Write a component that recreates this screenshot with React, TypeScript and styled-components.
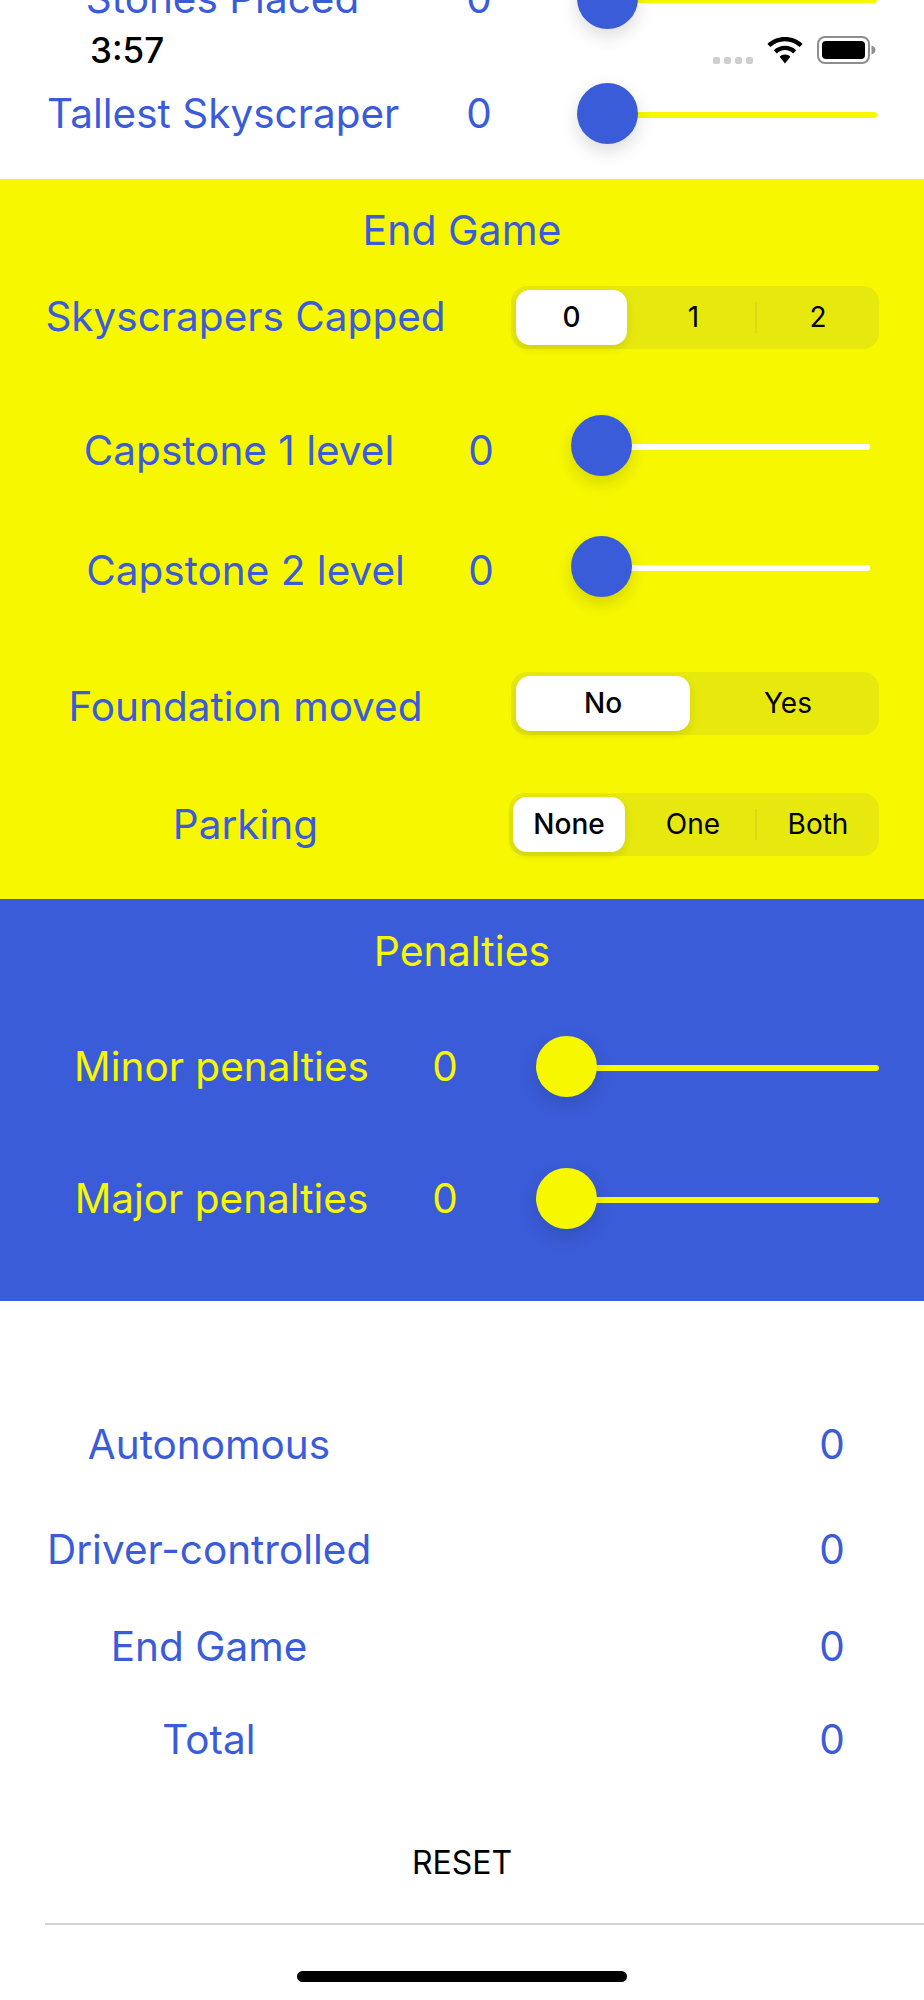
import React from "react";
import styled, { createGlobalStyle } from "styled-components";

const BLUE = "#3a5cd8";
const YELLOW = "#f7f800";

const GlobalStyle = createGlobalStyle`
  html, body {
    margin: 0;
    padding: 0;
    background: #ffffff;
  }
  * {
    box-sizing: border-box;
  }
`;

const Screen = styled.div`
  position: relative;
  width: 924px;
  height: 2000px;
  overflow: hidden;
  background: #ffffff;
  font-family: Inter, "Liberation Sans", sans-serif;
`;

// the list is scrolled: the first row sits half above the screen
const Scroller = styled.div`
  margin-top: -59px;
`;

const StatusBar = styled.div`
  position: absolute;
  top: 0;
  left: 0;
  right: 0;
  height: 80px;
`;

const Clock = styled.span`
  position: absolute;
  left: 90px;
  top: 29px;
  font-size: 35px;
  line-height: 42px;
  font-weight: 500;
  color: #000000;
`;

const StatusIcons = styled.div`
  position: absolute;
  left: 713px;
  top: 36px;
  display: flex;
  align-items: center;
  gap: 14px;
`;

const SignalDots = styled.div`
  display: flex;
  gap: 4px;
  margin-top: 20px;
`;

const SignalDot = styled.span`
  width: 7px;
  height: 7px;
  border-radius: 2px;
  background: #cfcfcf;
`;

const Section = styled.section<{ $bg: string; $top: number; $bottom: number }>`
  background: ${(p) => p.$bg};
  padding-top: ${(p) => p.$top}px;
  padding-bottom: ${(p) => p.$bottom}px;
`;

const SectionTitle = styled.div<{ $color: string }>`
  height: 48px;
  line-height: 48px;
  font-size: 41px;
  text-align: center;
  color: ${(p) => p.$color};
`;

const Row = styled.div<{ $columns: string; $left: number; $top?: number; $height?: number }>`
  display: grid;
  grid-template-columns: ${(p) => p.$columns};
  align-items: center;
  height: ${(p) => p.$height ?? 64}px;
  padding-left: ${(p) => p.$left}px;
  margin-top: ${(p) => p.$top ?? 0}px;
`;

const Label = styled.span<{ $color: string; $drop?: number; $back?: number }>`
  padding-top: ${(p) => p.$drop ?? 0}px;
  padding-right: ${(p) => p.$back ?? 0}px;
  font-size: 40.5px;
  line-height: 48px;
  text-align: center;
  white-space: nowrap;
  color: ${(p) => p.$color};
`;

const SliderBox = styled.div<{ $left: number }>`
  position: relative;
  display: flex;
  align-items: center;
  height: 62px;
  margin-left: ${(p) => p.$left}px;
`;

const Track = styled.div<{ $color: string }>`
  width: 100%;
  height: 6px;
  margin-top: 2px;
  border-radius: 3px;
  background: ${(p) => p.$color};
`;

const Thumb = styled.div<{ $color: string }>`
  position: absolute;
  left: 0;
  top: 0;
  width: 61px;
  height: 61px;
  border-radius: 50%;
  background: ${(p) => p.$color};
  box-shadow: 0 7px 18px rgba(0, 0, 0, 0.14);
`;

const Segmented = styled.div<{ $columns: string; $gap?: number; $left?: number; $inset?: number }>`
  display: grid;
  grid-template-columns: ${(p) => p.$columns};
  column-gap: ${(p) => p.$gap ?? 0}px;
  height: 63px;
  margin-left: ${(p) => p.$left ?? 0}px;
  padding: 4px 0 4px ${(p) => p.$inset ?? 5}px;
  border-radius: 16px;
  background: #e7e80d;
`;

const SegItem = styled.div<{ $active?: boolean; $divider?: boolean; $nudge?: number }>`
  position: relative;
  display: flex;
  align-items: center;
  justify-content: center;
  padding-left: ${(p) => p.$nudge ?? 0}px;
  font-size: 28px;
  font-weight: ${(p) => (p.$active ? 500 : 400)};
  color: #000000;
  background: ${(p) => (p.$active ? "#ffffff" : "transparent")};
  border-radius: 14px;
  box-shadow: ${(p) => (p.$active ? "0 4px 10px rgba(0, 0, 0, 0.1)" : "none")};

  &::before {
    content: "";
    display: ${(p) => (p.$divider ? "block" : "none")};
    position: absolute;
    left: 0;
    top: 12px;
    bottom: 12px;
    width: 2px;
    background: #dcdc10;
  }
`;

const SummaryRow = styled.div<{ $top: number }>`
  display: flex;
  justify-content: space-between;
  align-items: center;
  height: 48px;
  margin-top: ${(p) => p.$top}px;
  padding: 0 62px 0 47px;
`;

const SummaryLabel = styled(Label)`
  width: 324px;
`;

const SummaryValue = styled(Label)`
  width: 60px;
`;

const ResetButton = styled.div`
  height: 40px;
  margin-top: 79px;
  line-height: 40px;
  text-align: center;
  font-size: 32px;
  color: #000000;
`;

const Divider = styled.div`
  height: 2px;
  margin: 40px 0 0 45px;
  background: #d2d2d2;
`;

const HomeBar = styled.div`
  position: absolute;
  left: 297px;
  top: 1971px;
  width: 330px;
  height: 11px;
  border-radius: 6px;
  background: #000000;
`;

function Slider({ thumb, track, left }: { thumb: string; track: string; left: number }) {
  return (
    <SliderBox $left={left}>
      <Track $color={track} />
      <Thumb $color={thumb} />
    </SliderBox>
  );
}

function WifiIcon() {
  return (
    <svg width="36" height="27" viewBox="0 0 36 27">
      <path d="M18 0C11.2 0 5 2.6 0.4 6.9L3.4 10C7.2 6.4 12.3 4.2 18 4.2S28.8 6.4 32.6 10L35.6 6.9C31 2.6 24.8 0 18 0Z" fill="#000" />
      <path d="M18 8.8C13.7 8.8 9.7 10.5 6.8 13.3L9.8 16.4C11.9 14.3 14.8 13 18 13S24.1 14.3 26.2 16.4L29.2 13.3C26.3 10.5 22.3 8.8 18 8.8Z" fill="#000" />
      <path d="M18 17.6C15.9 17.6 14 18.4 12.6 19.8L18 26.5L23.4 19.8C22 18.4 20.1 17.6 18 17.6Z" fill="#000" />
    </svg>
  );
}

function BatteryIcon() {
  return (
    <svg width="60" height="28" viewBox="0 0 60 28">
      <rect x="1" y="1" width="51" height="26" rx="7" fill="none" stroke="#8e8e8e" strokeWidth="2" />
      <rect x="5" y="5" width="43" height="18" rx="4" fill="#000" />
      <path d="M54.5 9.5C57 10.2 58.5 11.8 58.5 14S57 17.8 54.5 18.5Z" fill="#8e8e8e" />
    </svg>
  );
}

export default function App() {
  const whiteCols = "351px 162px 317px";
  const yellowCols = "401px 70px 354px";
  const blueCols = "353px 94px 387px";
  const segCols = "401px 65px 368px";

  return (
    <Screen>
      <GlobalStyle />
      <Scroller>
        <Section $bg="#ffffff" $top={0} $bottom={8}>
          <Row $columns={whiteCols} $left={47} $height={115}>
            <Label $color={BLUE}>Stones Placed</Label>
            <Label $color={BLUE}>0</Label>
            <Slider thumb={BLUE} track={YELLOW} left={17} />
          </Row>
          <Row $columns={whiteCols} $left={47} $height={115}>
            <Label $color={BLUE}>Tallest Skyscraper</Label>
            <Label $color={BLUE}>0</Label>
            <Slider thumb={BLUE} track={YELLOW} left={17} />
          </Row>
        </Section>

        <Section $bg={YELLOW} $top={27} $bottom={43}>
          <SectionTitle $color={BLUE}>End Game</SectionTitle>
          <Row $columns={segCols} $left={45} $top={31}>
            <Label $color={BLUE}>Skyscrapers Capped</Label>
            <span />
            <Segmented $columns="111px 128px 124px">
              <SegItem $active>0</SegItem>
              <SegItem $nudge={5}>1</SegItem>
              <SegItem $divider $nudge={2}>2</SegItem>
            </Segmented>
          </Row>
          <Row $columns={yellowCols} $left={45} $top={65}>
            <Label $color={BLUE} $drop={10} $back={13}>Capstone 1 level</Label>
            <Label $color={BLUE} $drop={10}>0</Label>
            <Slider thumb={BLUE} track="#ffffff" left={55} />
          </Row>
          <Row $columns={yellowCols} $left={45} $top={57}>
            <Label $color={BLUE} $drop={8}>Capstone 2 level</Label>
            <Label $color={BLUE} $drop={8}>0</Label>
            <Slider thumb={BLUE} track="#ffffff" left={55} />
          </Row>
          <Row $columns={segCols} $left={45} $top={72}>
            <Label $color={BLUE} $drop={8}>Foundation moved</Label>
            <span />
            <Segmented $columns="174px 1fr" $gap={7}>
              <SegItem $active>No</SegItem>
              <SegItem>Yes</SegItem>
            </Segmented>
          </Row>
          <Row $columns="401px 63px 370px" $left={45} $top={57}>
            <Label $color={BLUE} $drop={2}>Parking</Label>
            <span />
            <Segmented $columns="112px 130px 124px" $inset={4}>
              <SegItem $active>None</SegItem>
              <SegItem $nudge={6}>One</SegItem>
              <SegItem $divider $nudge={2}>Both</SegItem>
            </Segmented>
          </Row>
        </Section>

        <Section $bg={BLUE} $top={28} $bottom={70}>
          <SectionTitle $color={YELLOW}>Penalties</SectionTitle>
          <Row $columns={blueCols} $left={45} $top={60}>
            <Label $color={YELLOW}>Minor penalties</Label>
            <Label $color={YELLOW}>0</Label>
            <Slider thumb={YELLOW} track={YELLOW} left={44} />
          </Row>
          <Row $columns={blueCols} $left={45} $top={68}>
            <Label $color={YELLOW}>Major penalties</Label>
            <Label $color={YELLOW}>0</Label>
            <Slider thumb={YELLOW} track={YELLOW} left={44} />
          </Row>
        </Section>

        <SummaryRow $top={120}>
          <SummaryLabel $color={BLUE}>Autonomous</SummaryLabel>
          <SummaryValue $color={BLUE}>0</SummaryValue>
        </SummaryRow>
        <SummaryRow $top={57}>
          <SummaryLabel $color={BLUE}>Driver-controlled</SummaryLabel>
          <SummaryValue $color={BLUE}>0</SummaryValue>
        </SummaryRow>
        <SummaryRow $top={49}>
          <SummaryLabel $color={BLUE}>End Game</SummaryLabel>
          <SummaryValue $color={BLUE}>0</SummaryValue>
        </SummaryRow>
        <SummaryRow $top={45}>
          <SummaryLabel $color={BLUE}>Total</SummaryLabel>
          <SummaryValue $color={BLUE}>0</SummaryValue>
        </SummaryRow>
        <ResetButton>RESET</ResetButton>
        <Divider />
      </Scroller>

      <StatusBar>
        <Clock>3:57</Clock>
        <StatusIcons>
          <SignalDots>
            <SignalDot />
            <SignalDot />
            <SignalDot />
            <SignalDot />
          </SignalDots>
          <WifiIcon />
          <BatteryIcon />
        </StatusIcons>
      </StatusBar>
      <HomeBar />
    </Screen>
  );
}
